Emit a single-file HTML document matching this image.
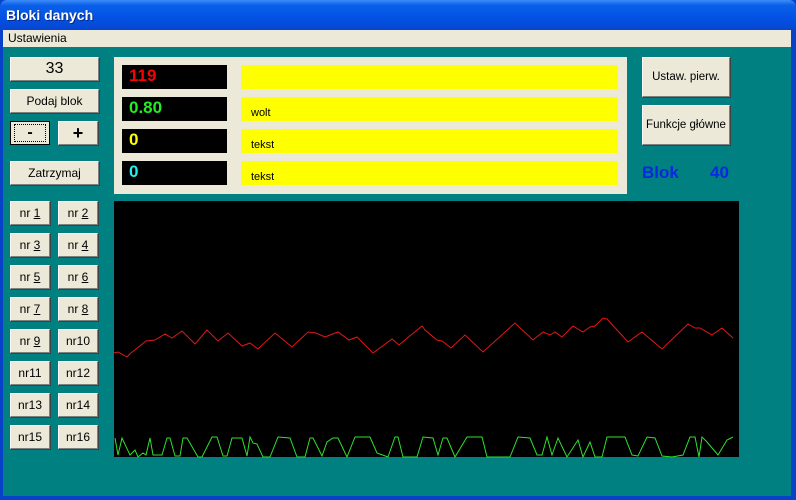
<!DOCTYPE html>
<html><head><meta charset="utf-8"><style>
*{margin:0;padding:0;box-sizing:border-box}
body{width:796px;height:500px;overflow:hidden;background:#0842c8;font-family:"Liberation Sans",Arial,sans-serif;position:relative}
.title{position:absolute;left:0;top:0;width:796px;height:30px;background:linear-gradient(#3d8cf8 0%,#0a5fe8 18%,#0352e4 60%,#0646d0 100%);border-radius:7px 7px 0 0}
.title span{position:absolute;left:6px;top:7px;color:#fff;font-weight:bold;font-size:14px;text-shadow:1px 1px #0a2a80}
.menu{position:absolute;left:3px;top:30px;width:788px;height:17px;background:#ece9d8;font-size:12px;padding:1px 0 0 5px}
.client{position:absolute;left:3px;top:47px;width:788px;height:449px;background:#008080}
.b{position:absolute;background:#ece9d8;border:1px solid;border-color:#fff #808080 #808080 #fff;box-shadow:1px 1px 0 #404040;font-size:12px;display:flex;align-items:center;justify-content:center;color:#000;white-space:nowrap}
.blk{position:absolute;left:122px;width:105px;height:24px;background:#000;font-weight:bold;font-size:17px;padding:1px 0 0 7px}
.yel{position:absolute;left:241px;width:377px;height:24px;background:#ff0;font-size:11px;padding:10px 0 0 10px}
u{text-decoration:underline}
</style></head><body>
<div class="title"><span>Bloki danych</span></div>
<div class="menu">Ustawienia</div>
<div class="client"></div>
<div class="b" style="left:10px;top:57px;width:89px;height:24px;font-size:16px">33</div>
<div class="b" style="left:10px;top:89px;width:89px;height:24px">Podaj blok</div>
<div class="b" style="left:10px;top:121px;width:40px;height:24px;border:1px solid #000;box-shadow:none;font-size:16px;font-weight:bold"><span style="border:1px dotted #000;width:32px;height:18px;display:flex;align-items:center;justify-content:center">-</span></div>
<div class="b" style="left:58px;top:121px;width:40px;height:24px;font-size:18px;font-weight:bold">+</div>
<div class="b" style="left:10px;top:161px;width:89px;height:24px">Zatrzymaj</div>
<div class="b" style="left:10px;top:201px;width:40px;height:24px">nr&nbsp;<u>1</u></div>
<div class="b" style="left:58px;top:201px;width:40px;height:24px">nr&nbsp;<u>2</u></div>
<div class="b" style="left:10px;top:233px;width:40px;height:24px">nr&nbsp;<u>3</u></div>
<div class="b" style="left:58px;top:233px;width:40px;height:24px">nr&nbsp;<u>4</u></div>
<div class="b" style="left:10px;top:265px;width:40px;height:24px">nr&nbsp;<u>5</u></div>
<div class="b" style="left:58px;top:265px;width:40px;height:24px">nr&nbsp;<u>6</u></div>
<div class="b" style="left:10px;top:297px;width:40px;height:24px">nr&nbsp;<u>7</u></div>
<div class="b" style="left:58px;top:297px;width:40px;height:24px">nr&nbsp;<u>8</u></div>
<div class="b" style="left:10px;top:329px;width:40px;height:24px">nr&nbsp;<u>9</u></div>
<div class="b" style="left:58px;top:329px;width:40px;height:24px">nr10</div>
<div class="b" style="left:10px;top:361px;width:40px;height:24px">nr11</div>
<div class="b" style="left:58px;top:361px;width:40px;height:24px">nr12</div>
<div class="b" style="left:10px;top:393px;width:40px;height:24px">nr13</div>
<div class="b" style="left:58px;top:393px;width:40px;height:24px">nr14</div>
<div class="b" style="left:10px;top:425px;width:40px;height:24px">nr15</div>
<div class="b" style="left:58px;top:425px;width:40px;height:24px">nr16</div>
<div style="position:absolute;left:114px;top:57px;width:513px;height:137px;background:#ece9d8"></div>
<div class="blk" style="top:65px;color:#f00">119</div>
<div class="blk" style="top:97px;color:#2e2">0.80</div>
<div class="blk" style="top:129px;color:#ff0">0</div>
<div class="blk" style="top:161px;color:#2ee">0</div>
<div class="yel" style="top:65px"></div>
<div class="yel" style="top:97px">wolt</div>
<div class="yel" style="top:129px">tekst</div>
<div class="yel" style="top:161px">tekst</div>
<div class="b" style="left:642px;top:57px;width:88px;height:40px;font-size:11.5px">Ustaw. pierw.</div>
<div class="b" style="left:642px;top:105px;width:88px;height:40px;font-size:11.5px">Funkcje główne</div>
<div style="position:absolute;left:642px;top:163px;color:#0a28e0;font-size:17px;font-weight:bold">Blok</div>
<div style="position:absolute;left:710px;top:163px;color:#0a28e0;font-size:17px;font-weight:bold">40</div>
<svg style="position:absolute;left:0;top:0" width="796" height="500">
<rect x="114" y="201" width="625" height="256" fill="#000"/>
<polyline fill="none" stroke="#e01818" stroke-width="1" points="114,353 118,352 127,357 131,353 146,341 155,340 165,334 172,338 182,331 195,344 207,330 218,341 228,333 242,346 250,343 258,349 275,333 292,347 308,332 316,333 325,337 338,332 349,340 357,337 373,353 392,339 399,345 422,326 425,330 437,340 442,341 451,348 465,335 483,352 515,323 533,340 543,332 550,335 555,332 562,337 573,326 583,332 590,327 595,326 603,318 607,319 628,342 642,332 662,349 688,324 695,328 700,328 712,335 722,328 733,338"/>
<polyline fill="none" stroke="#30e030" stroke-width="1" points="115,438 118,455 122,438 130,455 135,450 138,457 143,453 146,455 150,438 153,455 162,455 167,438 170,438 175,456 180,456 183,438 187,438 198,457 202,457 212,437 217,437 223,456 227,456 232,438 242,438 247,456 250,437 253,443 257,444 263,457 270,457 278,437 290,438 297,457 305,457 310,438 313,438 322,456 327,442 333,438 338,438 347,457 355,437 370,437 377,453 388,457 395,437 398,437 403,457 417,457 423,437 433,438 438,455 443,438 447,438 455,457 467,437 482,437 487,457 510,457 518,437 530,438 537,455 542,455 547,437 552,455 558,438 567,457 578,440 583,457 590,442 595,457 602,457 607,437 625,437 632,455 638,456 647,437 655,438 662,456 672,457 683,455 690,437 695,437 699,457 702,437 707,442 718,455 727,440 733,437"/>
</svg>
</body></html>
